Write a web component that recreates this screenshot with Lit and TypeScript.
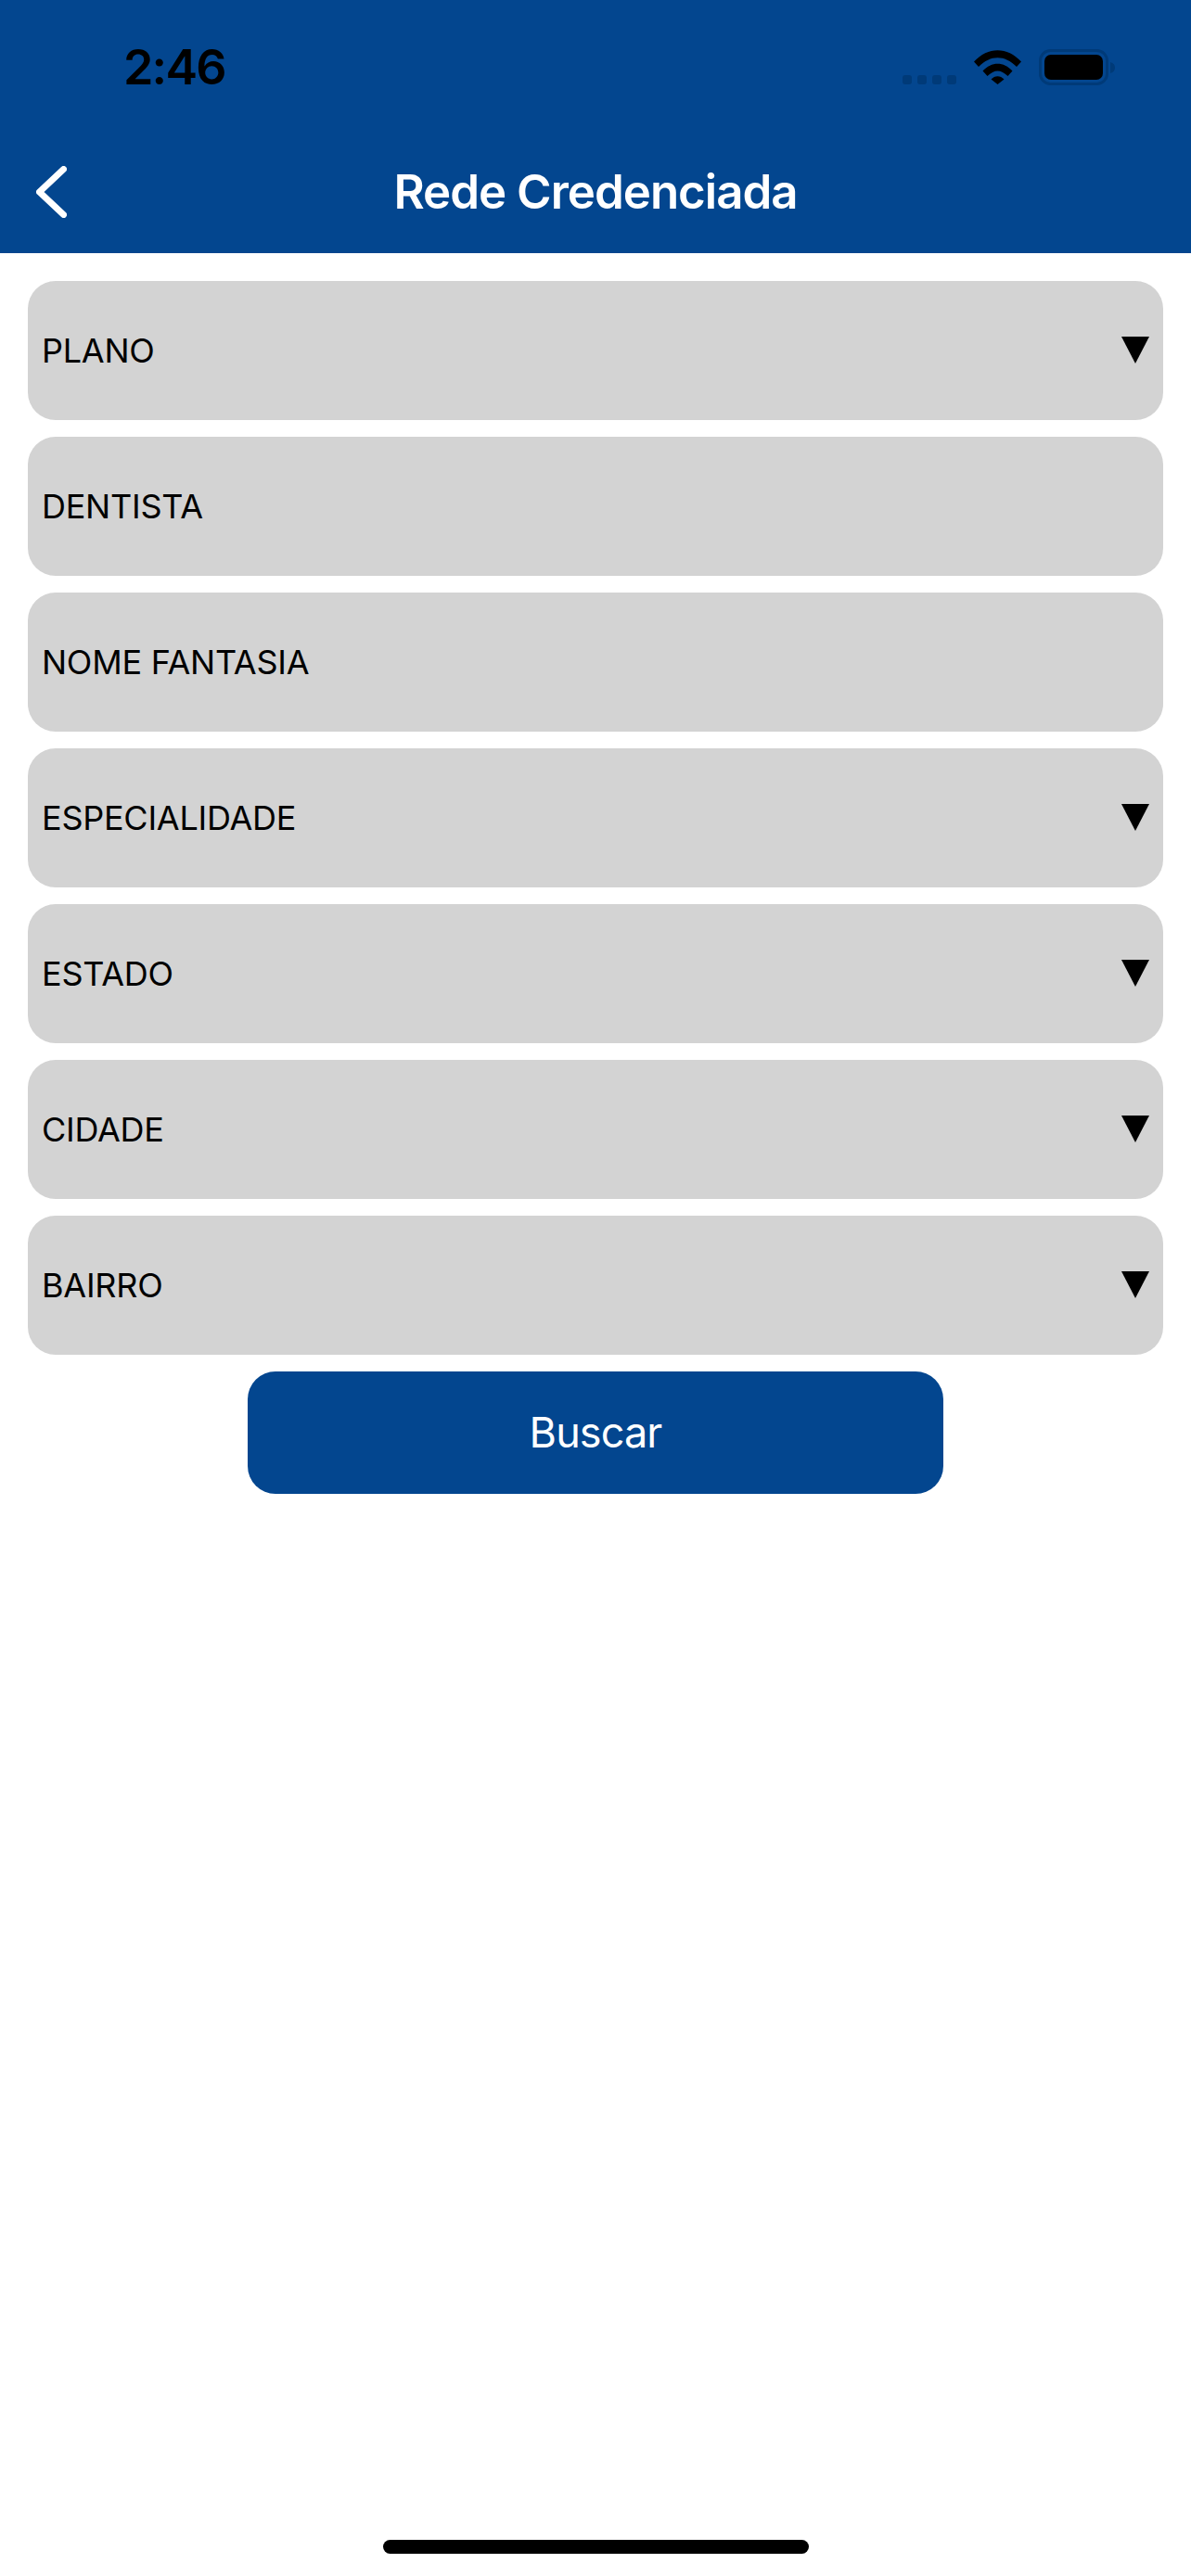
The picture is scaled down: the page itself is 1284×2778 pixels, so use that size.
import { LitElement, html, css, svg } from "lit";
import { customElement } from "lit/decorators.js";

const FIELDS: { label: string; select: boolean }[] = [
  { label: "PLANO", select: true },
  { label: "DENTISTA", select: false },
  { label: "NOME FANTASIA", select: false },
  { label: "ESPECIALIDADE", select: true },
  { label: "ESTADO", select: true },
  { label: "CIDADE", select: true },
  { label: "BAIRRO", select: true },
];

@customElement("app-root")
export class AppRoot extends LitElement {
  static styles = css`
    :host {
      display: flex;
      flex-direction: column;
      width: 1284px;
      height: 2778px;
      background: #fff;
      font-family: Inter, "Liberation Sans", sans-serif;
      overflow: hidden;
    }
    .header {
      background: #03468f;
      height: 273.3px;
      box-sizing: border-box;
      flex: none;
    }
    .status {
      height: 145px;
      box-sizing: border-box;
      padding: 47px 82px 0 133px;
      display: flex;
      align-items: flex-start;
    }
    .time {
      font-size: 52px;
      line-height: 52px;
      font-weight: 600;
      letter-spacing: -1.8px;
      color: #000;
      width: 840px;
      flex: none;
    }
    .dots {
      display: flex;
      gap: 6px;
      margin-top: 34px;
      width: 77px;
      flex: none;
    }
    .dots i {
      width: 10px;
      height: 10px;
      border-radius: 3px;
      background: #003a78;
    }
    .wifi {
      width: 51px;
      height: 37px;
      margin-top: 7px;
      flex: none;
    }
    .battery {
      width: 82px;
      height: 39px;
      margin: 6px 0 0 19px;
      flex: none;
    }
    .nav {
      height: 128px;
      position: relative;
      display: flex;
      align-items: flex-start;
      justify-content: center;
    }
    .back {
      position: absolute;
      left: 39px;
      top: 34px;
      width: 33px;
      height: 56px;
    }
    .title {
      font-size: 51px;
      line-height: 62px;
      font-weight: 600;
      letter-spacing: -1px;
      color: #fff;
      margin-top: 31px;
    }
    .form {
      display: flex;
      flex-direction: column;
      gap: 18px;
      padding: 30px 30px 0;
    }
    .field {
      height: 150px;
      background: #d3d3d3;
      border-radius: 30px;
      display: flex;
      align-items: center;
      justify-content: space-between;
      padding: 0 15px;
      box-sizing: border-box;
    }
    .label {
      font-size: 36px;
      line-height: 44px;
      letter-spacing: -0.25px;
      color: #000;
    }
    .tri {
      width: 30px;
      height: 29px;
      flex: none;
      margin-top: -1px;
    }
    .btn {
      align-self: center;
      width: 750px;
      height: 132px;
      border-radius: 30px;
      background: #03468f;
      color: #fff;
      display: flex;
      align-items: center;
      justify-content: center;
      font-size: 45px;
      line-height: 54px;
      letter-spacing: -0.9px;
    }
    .home {
      margin: auto 0 24px 413px;
      width: 459px;
      height: 15px;
      background: #000;
      border-radius: 8px;
      flex: none;
    }
  `;

  private wifi() {
    return html`<svg class="wifi" viewBox="0 0 51 37">
      <path d="M0 12.5 C15 -4 36 -4 51 12.5 L46 18 C33 5 18 5 5 18 Z" />
      <path d="M9.5 22.5 C19 12 32 12 41.5 22.5 L36.5 28 C29 20.5 22 20.5 14.5 28 Z" />
      <path d="M18.5 31.5 C22.5 27 28.5 27 32.5 31.5 L25.5 37 Z" />
    </svg>`;
  }

  private battery() {
    return html`<svg class="battery" viewBox="0 0 82 39">
      <rect x="1.5" y="1.5" width="72" height="36" rx="11" fill="none" stroke="#003a78" stroke-width="3" />
      <rect x="6" y="6" width="63" height="27" rx="7" fill="#000" />
      ${svg`<path d="M77 14 C80.5 15 82 17 82 20 C82 23 80.5 25 77 26 Z" fill="#003a78" />`}
    </svg>`;
  }

  render() {
    return html`
      <div class="header">
        <div class="status">
          <div class="time">2:46</div>
          <div class="dots"><i></i><i></i><i></i><i></i></div>
          ${this.wifi()} ${this.battery()}
        </div>
        <div class="nav">
          <svg class="back" viewBox="0 0 33 56">
            <path d="M29.5 3.5 L3.5 28 L29.5 52.5" fill="none" stroke="#fff" stroke-width="7" stroke-linecap="round" stroke-linejoin="round" />
          </svg>
          <div class="title">Rede Credenciada</div>
        </div>
      </div>
      <div class="form">
        ${FIELDS.map(
          (f) => html`<div class="field">
            <span class="label">${f.label}</span>
            ${f.select
              ? html`<svg class="tri" viewBox="0 0 30 29"><polygon points="0,0 30,0 15,29" /></svg>`
              : null}
          </div>`
        )}
        <div class="btn">Buscar</div>
      </div>
      <div class="home"></div>
    `;
  }
}
